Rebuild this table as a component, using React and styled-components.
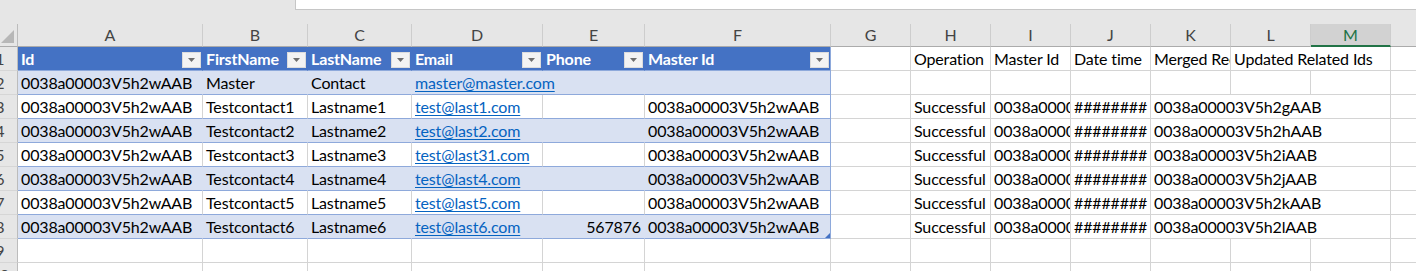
import React from 'react';
import styled, { createGlobalStyle } from 'styled-components';

const WIDTHS = [185, 105, 104, 131, 102, 186, 80, 80, 80, 80, 80, 80, 80, 80];
const LETTERS = ['A', 'B', 'C', 'D', 'E', 'F', 'G', 'H', 'I', 'J', 'K', 'L', 'M', 'N'];
const TEMPLATE = `18px ${WIDTHS.map((w) => `${w}px`).join(' ')}`;

const BLUE = '#4472c4';
const BAND = '#d9e1f2';
const TABLE_LINE = '#8ea9db';
const GRID = '#d4d4d4';

const GlobalStyle = createGlobalStyle`
  html, body {
    margin: 0;
    padding: 0;
    background: #fff;
  }
  body {
    overflow: hidden;
    font-family: Lato, "Open Sans", sans-serif;
  }
`;

const Window = styled.div`
  width: 1416px;
  height: 271px;
  overflow: hidden;
  background: #fff;
  font-family: Lato, "Open Sans", sans-serif;
  font-size: 16px;
  letter-spacing: -0.15px;
  color: #000;
`;

const TopBar = styled.div`
  display: flex;
  height: 24px;
  background: #e6e6e6;
`;

const FormulaBox = styled.div`
  flex: 1;
  margin-left: 295px;
  height: 10px;
  box-sizing: border-box;
  background: #fff;
  border-left: 1px solid #c6c6c6;
  border-bottom: 1px solid #c6c6c6;
`;

const Row = styled.div`
  display: grid;
  grid-template-columns: ${TEMPLATE};
  height: ${(p) => p.$h}px;
`;

const Corner = styled.div`
  display: flex;
  align-items: flex-end;
  justify-content: flex-end;
  box-sizing: border-box;
  padding: 0 3px 3px 0;
  background: #e6e6e6;
  border-right: 1px solid #bcbcbc;
  border-bottom: 1px solid #ababab;
`;

const ColLetter = styled.div`
  box-sizing: border-box;
  text-align: center;
  color: ${(p) => (p.$active ? '#217346' : '#444')};
  background: ${(p) => (p.$active ? '#d2d2d2' : '#e6e6e6')};
  border-right: 1px solid #cdcdcd;
  border-bottom: ${(p) => (p.$active ? '2px solid #217346' : '1px solid #ababab')};
  line-height: ${(p) => (p.$active ? 21 : 22)}px;
  letter-spacing: 0;
`;

const RowNum = styled.div`
  box-sizing: border-box;
  overflow: hidden;
  background: #e6e6e6;
  color: #444;
  border-right: 1px solid #bcbcbc;
  border-bottom: 1px solid #d6d6d6;
  span {
    display: block;
    width: 34px;
    margin-left: -17px;
    text-align: center;
    line-height: 23px;
    letter-spacing: 0;
  }
`;

const Cell = styled.div`
  position: relative;
  grid-column: span ${(p) => p.$span || 1};
  box-sizing: border-box;
  padding: 0 3px;
  white-space: nowrap;
  line-height: 23px;
  overflow: hidden;
  text-align: ${(p) => p.$align || 'left'};
  background: ${(p) => p.$bg || 'transparent'};
  border-right: 1px solid ${(p) => p.$right || GRID};
  border-bottom: 1px solid ${(p) => p.$bottom || GRID};
`;

const HeadCell = styled(Cell)`
  display: flex;
  align-items: flex-start;
  padding-right: 1px;
  color: #fff;
  font-weight: 700;
  background: ${BLUE};
  border-bottom-color: ${TABLE_LINE};
`;

const HeadLabel = styled.span`
  flex: 1;
  overflow: hidden;
`;

const FilterButton = styled.span`
  display: flex;
  align-items: center;
  justify-content: center;
  width: 19px;
  height: 16px;
  margin-top: 5px;
  box-sizing: border-box;
  background: #f3f3f3;
  border: 1px solid #dcdcdc;
`;

const Link = styled.span`
  color: #0563c1;
  text-decoration: underline;
  text-underline-offset: 2px;
`;

const Handle = styled.svg`
  position: absolute;
  right: 0;
  bottom: 0;
`;

const TABLE = [
  ['Id', 'FirstName', 'LastName', 'Email', 'Phone', 'Master Id'],
  ['0038a00003V5h2wAAB', 'Master', 'Contact', 'master@master.com', '', ''],
  ['0038a00003V5h2wAAB', 'Testcontact1', 'Lastname1', 'test@last1.com', '', '0038a00003V5h2wAAB'],
  ['0038a00003V5h2wAAB', 'Testcontact2', 'Lastname2', 'test@last2.com', '', '0038a00003V5h2wAAB'],
  ['0038a00003V5h2wAAB', 'Testcontact3', 'Lastname3', 'test@last31.com', '', '0038a00003V5h2wAAB'],
  ['0038a00003V5h2wAAB', 'Testcontact4', 'Lastname4', 'test@last4.com', '', '0038a00003V5h2wAAB'],
  ['0038a00003V5h2wAAB', 'Testcontact5', 'Lastname5', 'test@last5.com', '', '0038a00003V5h2wAAB'],
  ['0038a00003V5h2wAAB', 'Testcontact6', 'Lastname6', 'test@last6.com', '567876', '0038a00003V5h2wAAB'],
];

// text that runs on into empty neighbours, as in Excel: row -> { col: span }
const SPANS = {
  0: { 11: 2 },
  1: { 3: 2 },
  2: { 10: 3 },
  3: { 10: 3 },
  4: { 10: 3 },
  5: { 10: 3 },
  6: { 10: 3 },
  7: { 10: 3 },
};

// columns G..N for each row
const LOG_HEAD = ['', 'Operation', 'Master Id', 'Date time', 'Merged Records', 'Updated Related Ids', '', ''];
const logRow = (c) => ['', 'Successful', '0038a00003V5h2wAAB', '########', `0038a00003V5h2${c}AAB`, '', '', ''];
const LOG = [LOG_HEAD, [], ...'ghijkl'.split('').map(logRow)];

function FilterArrow() {
  return (
    <FilterButton>
      <svg width="7" height="4" viewBox="0 0 7 4">
        <polygon points="0,0 7,0 3.5,4" fill="#6e6e6e" />
      </svg>
    </FilterButton>
  );
}

function TableCell({ row, col, value, span }) {
  const last = col + span - 1 === 5;
  if (row === 0) {
    return (
      <HeadCell $right={last ? TABLE_LINE : BLUE}>
        <HeadLabel>{value}</HeadLabel>
        <FilterArrow />
      </HeadCell>
    );
  }
  const band = row % 2 === 1;
  return (
    <Cell
      $span={span}
      $bg={band ? BAND : '#fff'}
      $right={last ? TABLE_LINE : band ? BAND : GRID}
      $bottom={TABLE_LINE}
      $align={col === 4 ? 'right' : 'left'}
    >
      {col === 3 && value ? <Link>{value}</Link> : value}
      {row === 7 && last && (
        <Handle width="5" height="5" viewBox="0 0 5 5">
          <polygon points="5,0 5,5 0,5" fill={BLUE} />
        </Handle>
      )}
    </Cell>
  );
}

function SheetRow({ index }) {
  const table = TABLE[index];
  const log = LOG[index] || [];
  const spans = SPANS[index] || {};
  const cells = [];
  for (let c = 0; c < LETTERS.length; ) {
    const span = spans[c] || 1;
    const key = LETTERS[c];
    if (table && c < 6) {
      cells.push(<TableCell key={key} row={index} col={c} value={table[c]} span={span} />);
    } else {
      cells.push(
        <Cell key={key} $span={span}>
          {log[c - 6]}
        </Cell>
      );
    }
    c += span;
  }
  return (
    <Row $h={24}>
      <RowNum>
        <span>{index + 1}</span>
      </RowNum>
      {cells}
    </Row>
  );
}

export default function App() {
  return (
    <Window>
      <GlobalStyle />
      <TopBar>
        <FormulaBox />
      </TopBar>
      <Row $h={23}>
        <Corner>
          <svg width="13" height="13" viewBox="0 0 13 13">
            <polygon points="13,0 13,13 0,13" fill="#b7b7b7" />
          </svg>
        </Corner>
        {LETTERS.map((l) => (
          <ColLetter key={l} $active={l === 'M'}>
            {l}
          </ColLetter>
        ))}
      </Row>
      {Array.from({ length: 10 }, (_, i) => (
        <SheetRow key={i} index={i} />
      ))}
    </Window>
  );
}
